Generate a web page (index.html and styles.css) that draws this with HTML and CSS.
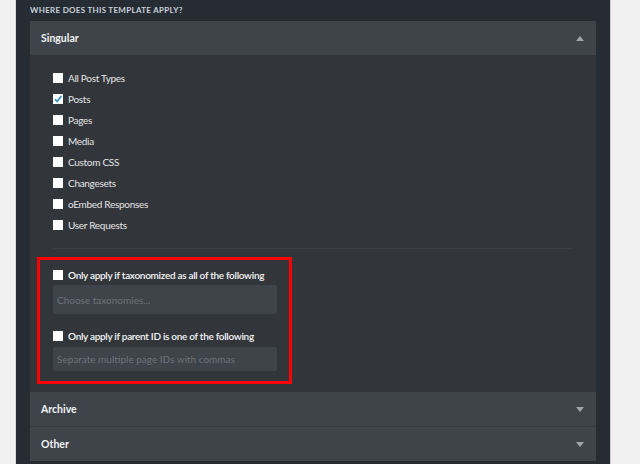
FILE: index.html
```html
<!DOCTYPE html>
<html>
<head>
  <meta charset="UTF-8">
  <title>Template conditions</title>
  <link rel="stylesheet" href="styles.css">
</head>
<body>
  <div class="page">
    <div class="gutter left"></div>
    <div class="panel">
      <div class="panel-title">Where does this template apply?</div>

      <div class="section">
        <div class="section-head">
          <span>Singular</span>
          <span class="arrow up"></span>
        </div>
        <div class="section-body">
          <ul class="checks">
            <li><span class="box"></span>All Post Types</li>
            <li><span class="box checked"><svg width="10" height="10" viewBox="0 0 10 10"><path d="M2 5.2 L4.2 7.4 L8.4 2" fill="none" stroke="#1e8cbe" stroke-width="1.6"/></svg></span>Posts</li>
            <li><span class="box"></span>Pages</li>
            <li><span class="box"></span>Media</li>
            <li><span class="box"></span>Custom CSS</li>
            <li><span class="box"></span>Changesets</li>
            <li><span class="box"></span>oEmbed Responses</li>
            <li><span class="box"></span>User Requests</li>
          </ul>
          <div class="divider"></div>
          <div class="highlight">
            <div class="opt"><span class="box"></span>Only apply if taxonomized as all of the following</div>
            <div class="field tall">Choose taxonomies...</div>
            <div class="opt second"><span class="box"></span>Only apply if parent ID is one of the following</div>
            <div class="field">Separate multiple page IDs with commas</div>
          </div>
        </div>
      </div>

      <div class="section split">
        <div class="section-head">
          <span>Archive</span>
          <span class="arrow down"></span>
        </div>
      </div>
      <div class="section">
        <div class="section-head">
          <span>Other</span>
          <span class="arrow down"></span>
        </div>
      </div>
    </div>
    <div class="gutter right"></div>
  </div>
</body>
</html>
```

FILE: styles.css
```css
*{
  margin:0;
  padding:0;
  box-sizing:border-box;
}

html,body{
  height:100%;
}

body{
  background:#f1f1f1;
  font-family:Lato, "Noto Sans", sans-serif;
  overflow:hidden;
}

.page{
  display:flex;
  height:464px;
}

.gutter{
  background:#f1f1f1;
}
.gutter.left{
  width:16px;
  border-right:1px solid #dcdcdc;
}
.gutter.right{
  flex:1;
  border-left:1px solid #c9cbcd;
}

.panel{
  width:594px;
  background:#262c33;
  padding:0 14px 0 14px;
}

.panel-title{
  height:21px;
  line-height:21px;
  font-size:8px;
  font-weight:700;
  letter-spacing:0.3px;
  text-transform:uppercase;
  color:#c9d1da;
}

.section-head{
  height:34px;
  background:#3f444b;
  display:flex;
  align-items:center;
  justify-content:space-between;
  padding:0 12px 0 11px;
  font-size:10.5px;
  font-weight:700;
  color:#f2f2f2;
}

.section.split .section-head{
  height:35px;
  border-bottom:1px solid #353940;
}

.arrow{
  width:0;
  height:0;
  border-left:4px solid transparent;
  border-right:4px solid transparent;
}
.arrow.up{
  border-bottom:5px solid #a0a5ab;
}
.arrow.down{
  border-top:5px solid #a0a5ab;
}

.section-body{
  background:#323539;
  padding:12px 23px 8px 23px;
}

.checks{
  list-style:none;
}
.checks li{
  height:21px;
  display:flex;
  align-items:center;
  font-size:10px;
  letter-spacing:-0.3px;
  color:#e4e6e8;
}

.box{
  width:10px;
  height:10px;
  background:#fff;
  margin-right:5px;
  flex:none;
  display:flex;
}

.divider{
  height:1px;
  background:#3b3f45;
  margin:13px 0 8px 0;
}

.highlight{
  border:3px solid #ff0000;
  margin:0 281px 0 -16px;
  padding:5px 12px 10px 13px;
}

.opt{
  height:20px;
  display:flex;
  align-items:center;
  white-space:nowrap;
  font-size:10px;
  font-weight:600;
  letter-spacing:-0.3px;
  color:#f5f6f7;
}
.opt.second{
  margin-top:12px;
}

.field{
  height:24px;
  margin-top:1px;
  background:#3f444b;
  border-radius:2px;
  font-size:10px;
  color:#6c7179;
  display:flex;
  align-items:center;
  padding-left:4px;
  white-space:nowrap;
}
.field.tall{
  height:29px;
  margin-top:0;
}
```
